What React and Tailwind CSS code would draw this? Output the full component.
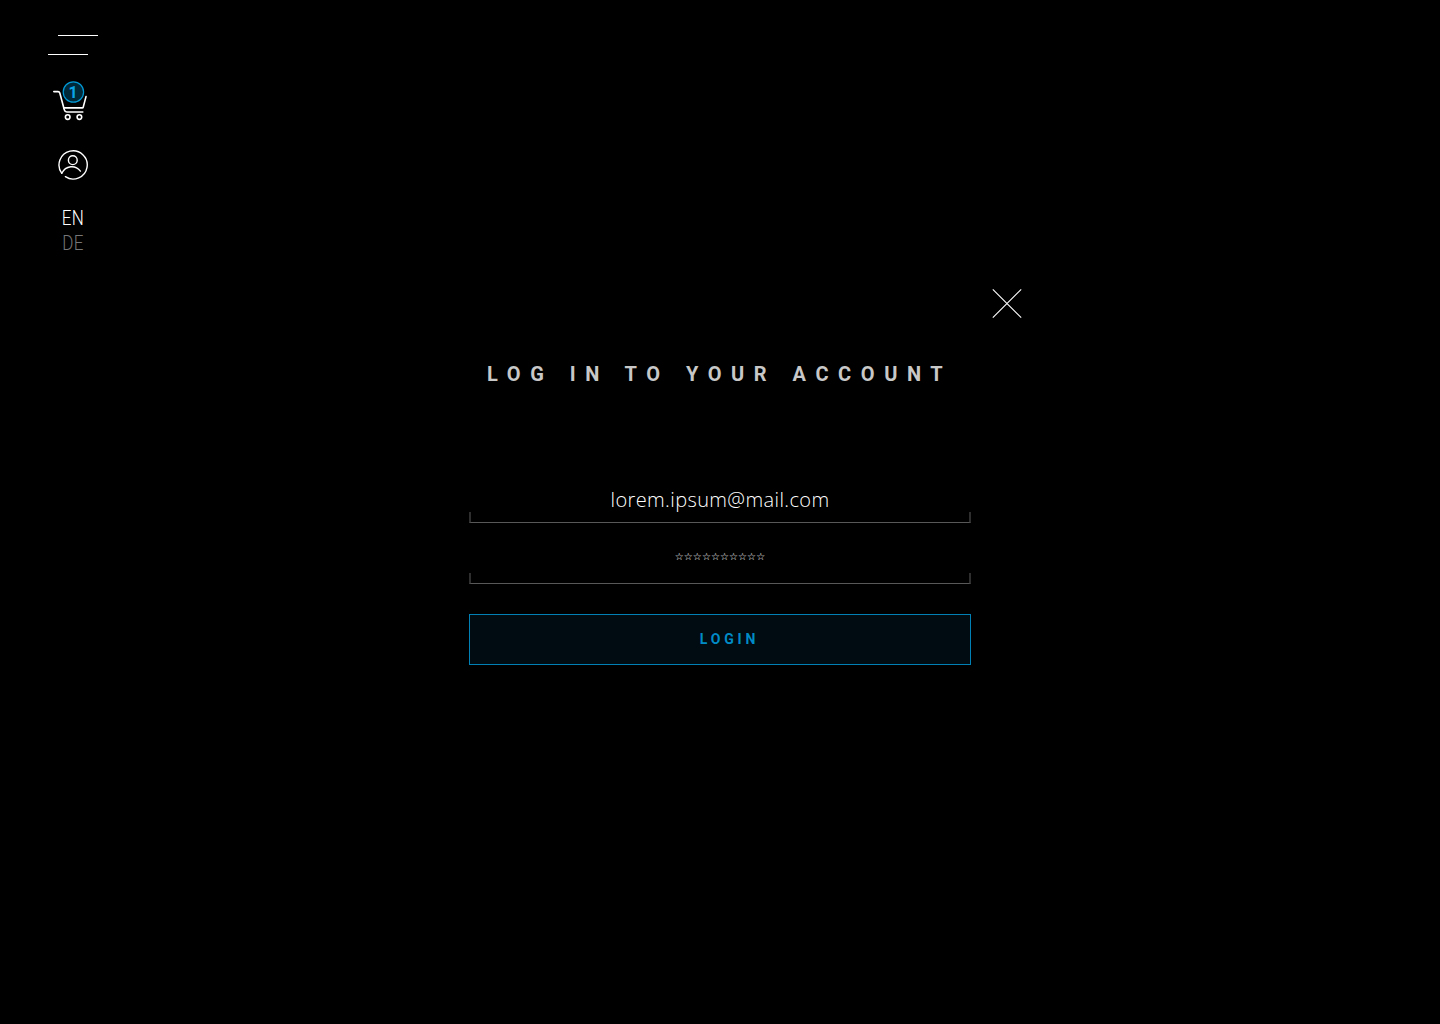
function CartIcon() {
  return (
    <svg className="block h-[50px] w-[50px]" viewBox="0 0 50 50" fill="none" stroke="#fff" strokeWidth="1.6" strokeLinecap="round" strokeLinejoin="round">
      <path d="M8.8 16.6H13Q14.4 16.6 14.8 18L19.3 34.8Q19.9 37 21.8 37H37.8" />
      <path d="M18.8 32.9H37.3Q38 32.9 38.2 32.2L41 21.6" />
      <circle cx="22.7" cy="42.1" r="2.3" />
      <circle cx="34.4" cy="42.1" r="2.3" />
      <circle cx="28.4" cy="17" r="10.2" fill="#00293a" stroke="#0099d6" strokeWidth="1.2" />
    </svg>
  );
}

function UserIcon() {
  return (
    <svg className="block h-[32px] w-[32px]" viewBox="0 0 32 32" fill="none" stroke="#fff" strokeWidth="1.4" strokeLinecap="round">
      <path d="M4.8 24.3A14.1 14.1 0 1 1 8.4 27.7" />
      <circle cx="15.8" cy="11.2" r="4.4" />
      <path d="M4.8 24.3C8.6 16.5 18.3 15.4 23.4 22.1" />
    </svg>
  );
}

function Field({ children }) {
  return (
    <div className="flex h-[43px] w-[502px] flex-col">
      <div className="flex h-8 items-center justify-center text-white">{children}</div>
      <div className="h-[11px] border-x-2 border-b border-x-[#2e2e2e] border-b-[#585858]" />
    </div>
  );
}

export default function App() {
  return (
    <div className="flex h-[1024px] w-[1440px] overflow-hidden bg-black font-['Roboto',sans-serif] text-white antialiased">
      <aside className="w-[145px] shrink-0 pt-[35px]">
        <div className="ml-12 h-5 w-[50px]">
          <div className="ml-[10px] h-px w-10 bg-white" />
          <div className="mt-[18px] h-px w-10 bg-white" />
        </div>
        <div className="relative mt-5 ml-[45px] w-[50px]">
          <CartIcon />
          <span className="absolute top-[8px] left-[18px] flex h-5 w-5 items-center justify-center text-[16px] leading-5 font-bold text-[#0aa5e6]">1</span>
        </div>
        <div className="mt-6 ml-[57px]">
          <UserIcon />
        </div>
        <div className="mt-[25px] ml-[48px] w-[50px] text-center text-[19.5px] leading-[25px] font-light">
          <div className="origin-center scale-x-[0.87] tracking-[0.4px]">EN</div>
          <div className="origin-center scale-x-[0.87] tracking-[0.4px] text-[#777]">DE</div>
        </div>
      </aside>

      <main className="ml-[324px] flex w-[553px] flex-col pt-[288px]">
        <svg className="ml-[523px] block h-[31px] w-[30px]" viewBox="0 0 30 31" fill="none" stroke="#fff" strokeWidth="1.1">
          <path d="M.8 1.3L29.2 29.7M29.2 1.3L.8 29.7" />
        </svg>
        <h1 className="mt-[42px] ml-[18px] h-[27px] text-[20px] leading-[27px] font-bold tracking-[9.6px] whitespace-nowrap text-[#c8c8c8] [word-spacing:1.7px]">LOG IN TO YOUR ACCOUNT</h1>
        <div className="mt-[92px] flex w-[502px] flex-col">
          <Field>
            <span className="relative top-1 font-['Open_Sans',sans-serif] text-[20px] leading-8 font-light tracking-[0.38px]">lorem.ipsum@mail.com</span>
          </Field>
          <div className="mt-[18px]">
            <Field>
              <span className="font-['DejaVu_Sans',sans-serif] text-[10px] leading-4 font-bold tracking-[0.08px]">☆☆☆☆☆☆☆☆☆☆</span>
            </Field>
          </div>
          <button className="mt-[30px] flex h-[51px] w-[502px] items-center justify-center border border-[#0080b5] bg-[#000c12] pl-[19px] text-[14px] font-bold tracking-[3.8px] text-[#008bc7]">LOGIN</button>
        </div>
      </main>
    </div>
  );
}
